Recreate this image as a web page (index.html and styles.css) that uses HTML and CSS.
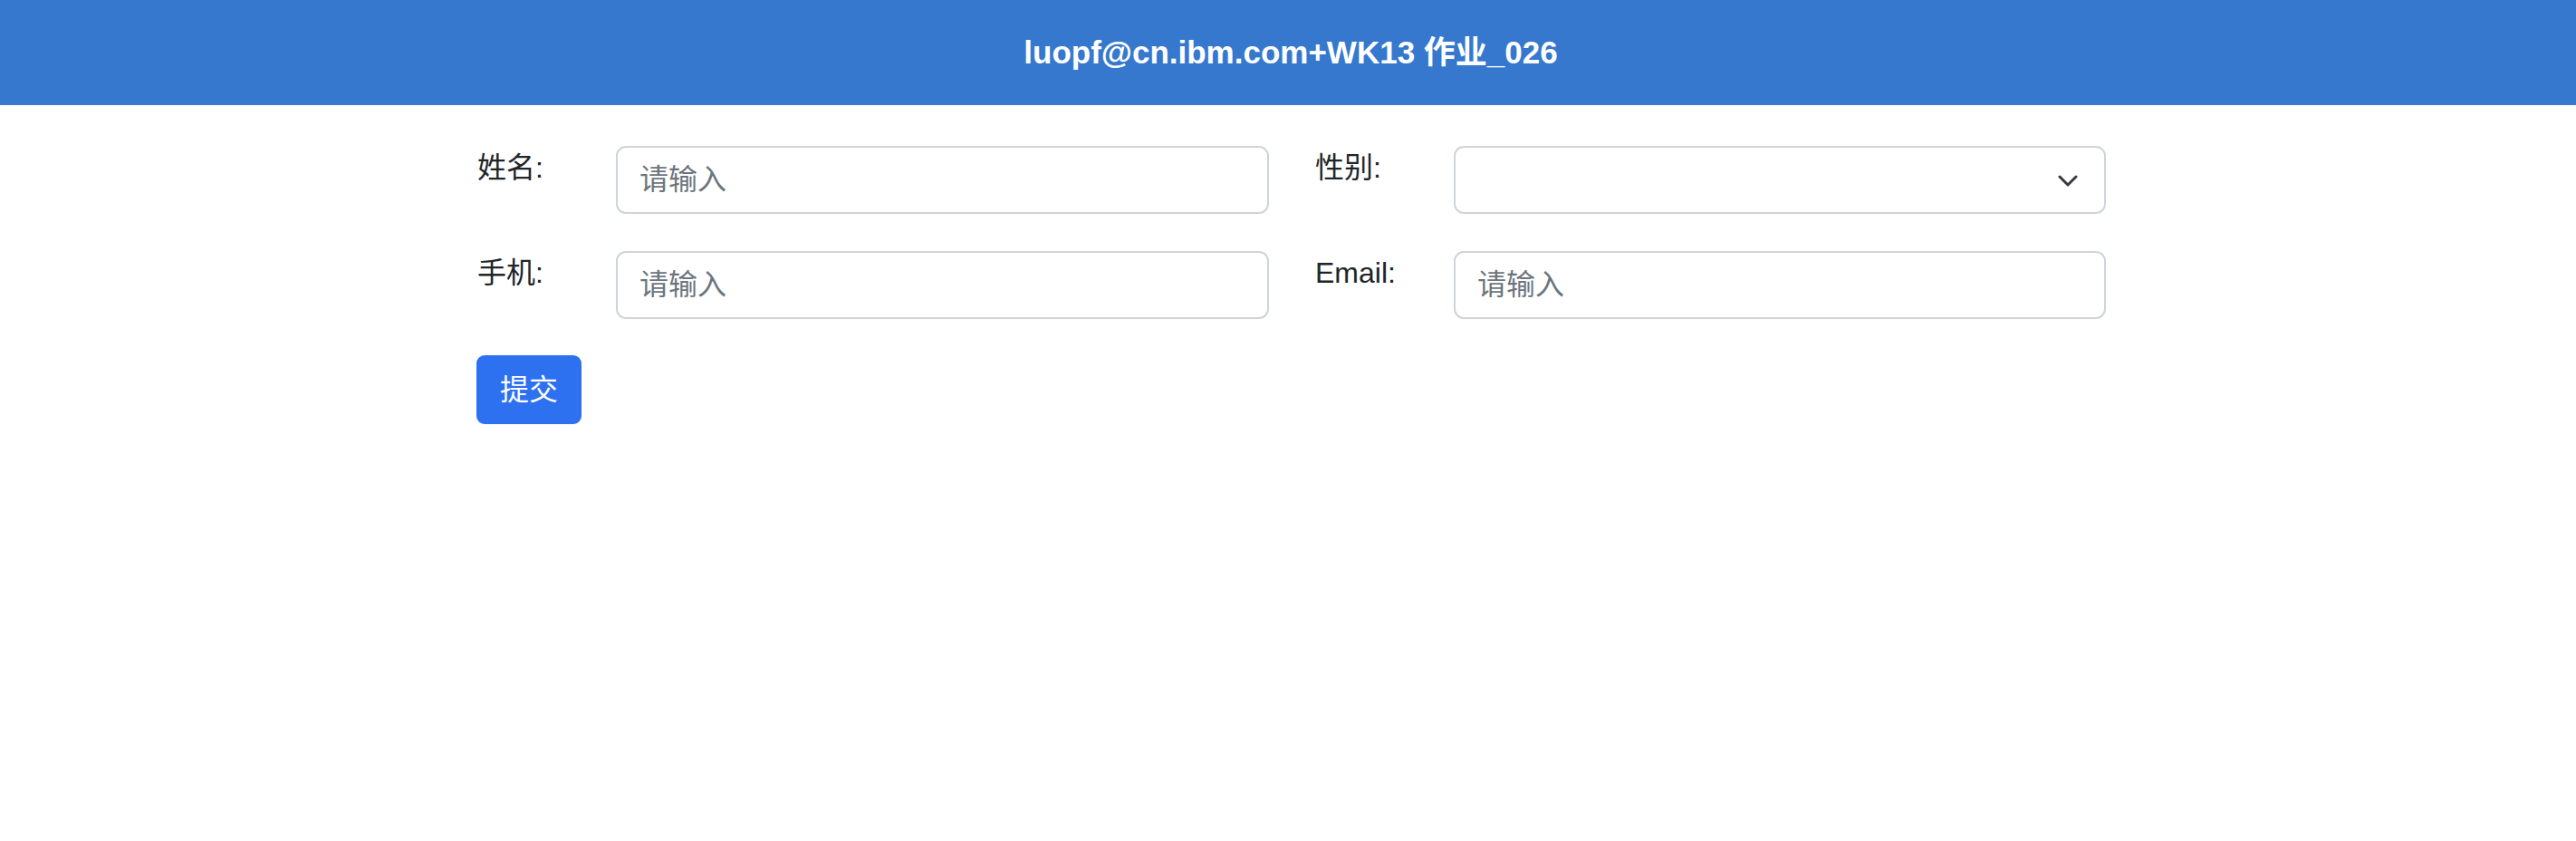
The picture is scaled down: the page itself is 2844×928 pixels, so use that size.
FILE: index.html
```html
<!DOCTYPE html>
<html lang="zh">
<head>
<meta charset="utf-8">
<title>作业_026</title>
<link rel="stylesheet" href="styles.css">
</head>
<body>
<header class="topbar">
  <h1 class="topbar-title">luopf@cn.ibm.com+WK13 作业_026</h1>
</header>
<main class="container">
  <form class="form">
    <div class="form-grid">
      <div class="field">
        <label class="field-label" for="name">姓名:</label>
        <input class="field-input" id="name" type="text" placeholder="请输入">
      </div>
      <div class="field">
        <label class="field-label" for="gender">性别:</label>
        <div class="select-wrap">
          <select class="field-input field-select" id="gender">
            <option value=""></option>
            <option value="m">男</option>
            <option value="f">女</option>
          </select>
          <svg class="select-chevron" width="22" height="13" viewBox="0 0 22 13" aria-hidden="true">
            <path d="M2 2 L11 11 L20 2" fill="none" stroke="#343a40" stroke-width="3" stroke-linecap="round" stroke-linejoin="round"/>
          </svg>
        </div>
      </div>
      <div class="field">
        <label class="field-label" for="phone">手机:</label>
        <input class="field-input" id="phone" type="text" placeholder="请输入">
      </div>
      <div class="field">
        <label class="field-label" for="email">Email:</label>
        <input class="field-input" id="email" type="text" placeholder="请输入">
      </div>
    </div>
    <button class="btn-submit" type="button">提交</button>
  </form>
</main>
</body>
</html>
```

FILE: styles.css
```css
* {
  box-sizing: border-box;
}

html, body {
  margin: 0;
  padding: 0;
  background: #ffffff;
}

body {
  font-family: "Liberation Sans", "Noto Sans CJK SC", sans-serif;
  color: #212529;
}

.topbar {
  height: 116px;
  background: #3578ce;
  display: flex;
  align-items: center;
  justify-content: center;
}

.topbar-title {
  margin: 0;
  font-size: 35px;
  font-weight: 700;
  color: #ffffff;
  line-height: 1.2;
  padding-left: 6px;
}

.container {
  width: 1806px;
  margin: 0 auto;
  padding: 45px 0 0 8px;
}

.form {
  display: flex;
  flex-direction: column;
  align-items: flex-start;
  gap: 40px;
}

.form-grid {
  width: 100%;
  display: grid;
  grid-template-columns: 874px 873px;
  column-gap: 51px;
  row-gap: 41px;
}

.field {
  display: flex;
  align-items: flex-start;
}

.field-label {
  width: 153px;
  flex: none;
  font-size: 32px;
  line-height: 48px;
  color: #212529;
}

.field-input {
  flex: 1;
  width: 100%;
  height: 75px;
  margin: 0;
  padding: 0 24px;
  border: 2px solid #ced4da;
  border-radius: 11px;
  background: #ffffff;
  font-family: "Liberation Sans", "Noto Sans CJK SC", sans-serif;
  font-size: 32px;
  color: #212529;
  outline: none;
}

.field-input::placeholder {
  color: #6c757d;
}

.select-wrap {
  flex: 1;
  position: relative;
  display: flex;
}

.field-select {
  appearance: none;
  -webkit-appearance: none;
}

.select-chevron {
  position: absolute;
  right: 31px;
  top: 32px;
  pointer-events: none;
}

.btn-submit {
  width: 116px;
  height: 76px;
  margin: 0 0 0 -1px;
  padding: 0;
  border: none;
  border-radius: 9px;
  background: #2d70f0;
  color: #ffffff;
  font-family: "Liberation Sans", "Noto Sans CJK SC", sans-serif;
  font-size: 32px;
  line-height: 1;
  cursor: pointer;
}
```
